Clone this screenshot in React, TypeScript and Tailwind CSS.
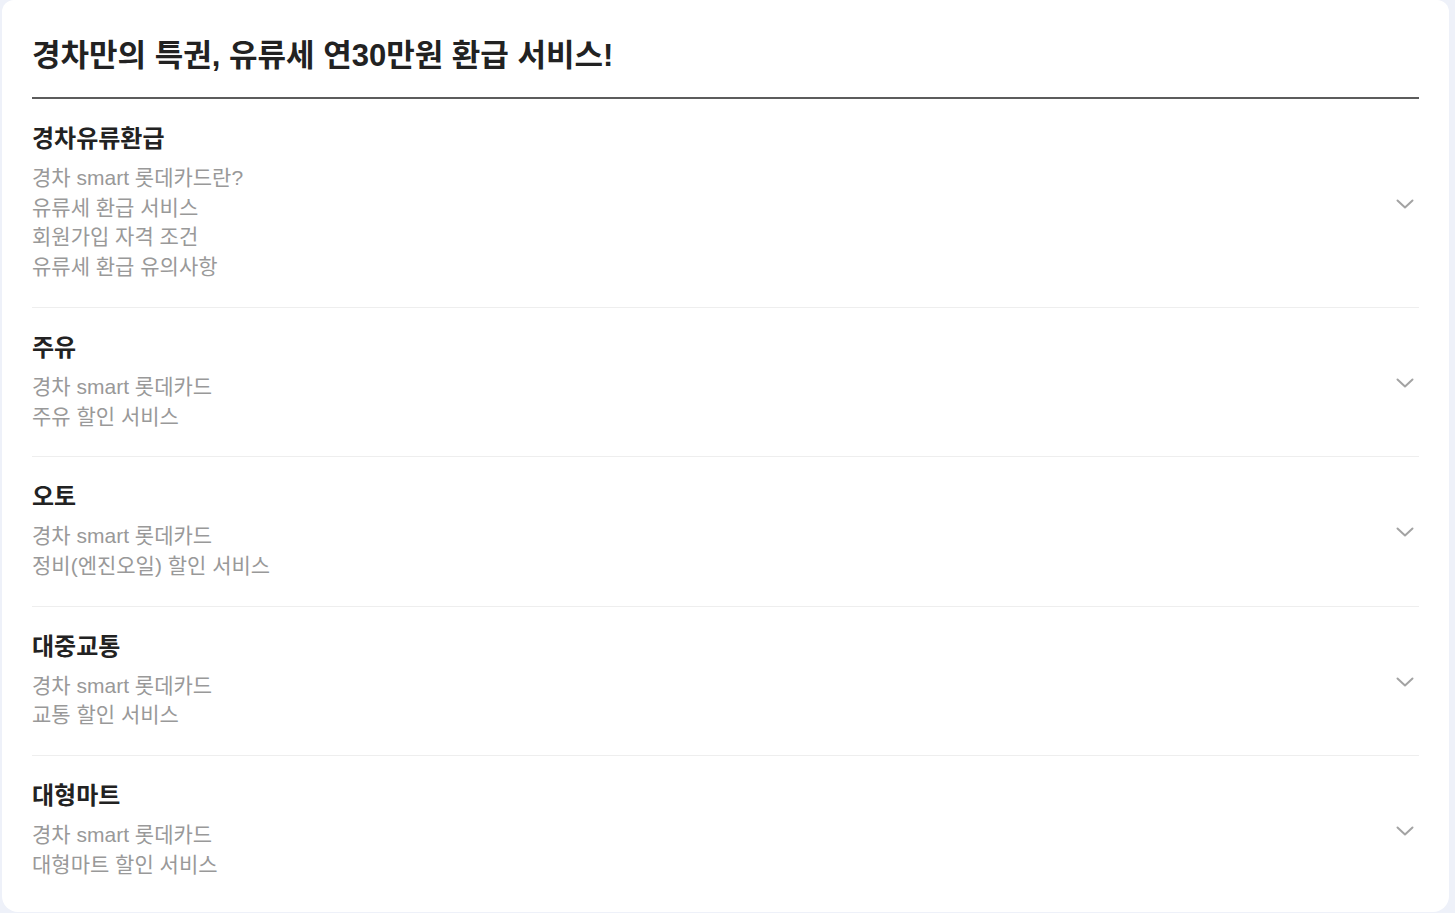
import React from "react";

type Section = {
  title: string;
  lines: string[];
};

const sections: Section[] = [
  {
    title: "경차유류환급",
    lines: ["경차 smart 롯데카드란?", "유류세 환급 서비스", "회원가입 자격 조건", "유류세 환급 유의사항"],
  },
  { title: "주유", lines: ["경차 smart 롯데카드", "주유 할인 서비스"] },
  { title: "오토", lines: ["경차 smart 롯데카드", "정비(엔진오일) 할인 서비스"] },
  { title: "대중교통", lines: ["경차 smart 롯데카드", "교통 할인 서비스"] },
  { title: "대형마트", lines: ["경차 smart 롯데카드", "대형마트 할인 서비스"] },
];

function Chevron() {
  return (
    <svg width="18" height="10" viewBox="0 0 18 10" fill="none" className="shrink-0">
      <polyline points="1.5,1.5 9,8.5 16.5,1.5" stroke="#a3a3a3" strokeWidth="2" strokeLinecap="round" strokeLinejoin="round" />
    </svg>
  );
}

function SectionRow({ section, last }: { section: Section; last: boolean }) {
  return (
    <div className={`flex items-center justify-between pt-[25px] ${last ? "pb-[33px]" : "border-b border-[#eeeeee] pb-[25px]"}`}>
      <div>
        <h3 className="text-[24px] font-bold leading-[30px] text-[#222222]">{section.title}</h3>
        <ul className="mt-[9px]">
          {section.lines.map((line) => (
            <li key={line} className="text-[21px] leading-[29.7px] text-[#999999]">
              {line}
            </li>
          ))}
        </ul>
      </div>
      <div className="pr-[5px] pt-[2px]">
        <Chevron />
      </div>
    </div>
  );
}

export default function App() {
  return (
    <div
      className="min-h-[913px] bg-[#eef1f9] pb-[2px] pl-[2px] pr-[6px]"
      style={{ fontFamily: '"Liberation Sans", "Noto Sans CJK KR", sans-serif' }}
    >
      <section className="rounded-b-2xl rounded-t-xl bg-white px-[30px]">
        <h2 className="pb-[21px] pt-[36px] text-[31px] font-bold leading-[40px] text-[#222222]">
          경차만의 특권, 유류세 연30만원 환급 서비스!
        </h2>
        <div className="h-[2px] bg-[#5c5c5c]" />
        {sections.map((section, i) => (
          <SectionRow key={section.title} section={section} last={i === sections.length - 1} />
        ))}
      </section>
    </div>
  );
}
